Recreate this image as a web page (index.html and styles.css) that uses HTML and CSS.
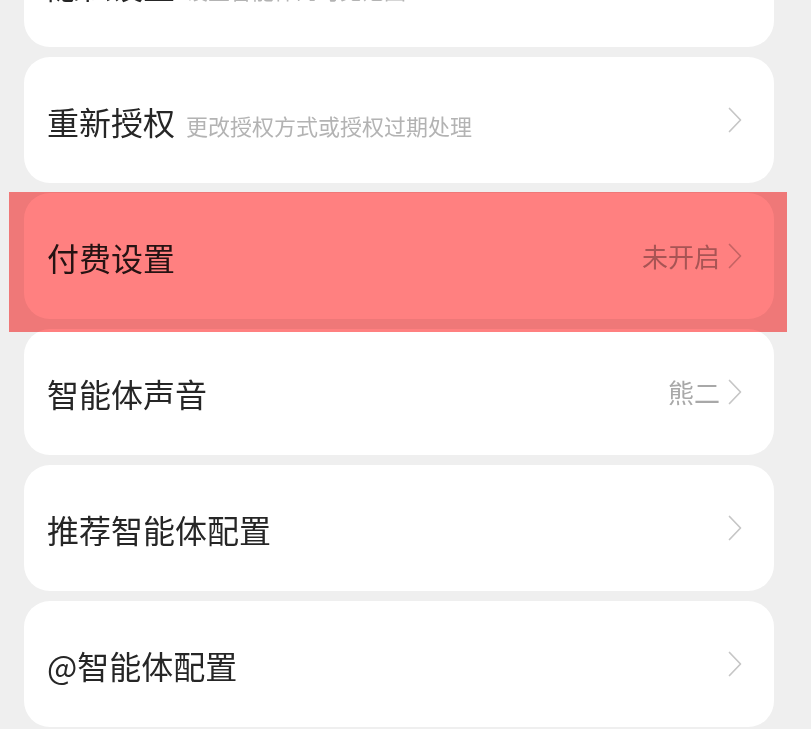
FILE: index.html
```html
<!DOCTYPE html>
<html lang="zh">
<head>
<meta charset="utf-8">
<link rel="stylesheet" href="styles.css">
</head>
<body>
<div class="list">
  <div class="card">
    <div class="left"><span class="title">隐私设置</span><span class="sub">设置智能体的可见范围</span></div>
    <div class="right"><svg class="chev" viewBox="0 0 14 26"><path d="M1.5 1.5 L12.5 13 L1.5 24.5" /></svg></div>
  </div>
  <div class="card">
    <div class="left"><span class="title">重新授权</span><span class="sub">更改授权方式或授权过期处理</span></div>
    <div class="right"><svg class="chev" viewBox="0 0 14 26"><path d="M1.5 1.5 L12.5 13 L1.5 24.5" /></svg></div>
  </div>
  <div class="card">
    <div class="left"><span class="title">付费设置</span></div>
    <div class="right"><span class="value">未开启</span><svg class="chev" viewBox="0 0 14 26"><path d="M1.5 1.5 L12.5 13 L1.5 24.5" /></svg></div>
  </div>
  <div class="card">
    <div class="left"><span class="title">智能体声音</span></div>
    <div class="right"><span class="value">熊二</span><svg class="chev" viewBox="0 0 14 26"><path d="M1.5 1.5 L12.5 13 L1.5 24.5" /></svg></div>
  </div>
  <div class="card">
    <div class="left"><span class="title">推荐智能体配置</span></div>
    <div class="right"><svg class="chev" viewBox="0 0 14 26"><path d="M1.5 1.5 L12.5 13 L1.5 24.5" /></svg></div>
  </div>
  <div class="card">
    <div class="left"><span class="title">@智能体配置</span></div>
    <div class="right"><svg class="chev" viewBox="0 0 14 26"><path d="M1.5 1.5 L12.5 13 L1.5 24.5" /></svg></div>
  </div>
</div>
<div class="highlight"></div>
</body>
</html>
```
FILE: styles.css
```css
html, body {
  margin: 0;
  padding: 0;
  background: #efefef;
  height: 100%;
  overflow: hidden;
}
body {
  font-family: "Noto Sans CJK SC", "Noto Sans", sans-serif;
  position: relative;
}
.list {
  display: flex;
  flex-direction: column;
  gap: 10px;
  padding: 0 37px 0 24px;
  margin-top: -79px;
}
.card {
  height: 126px;
  background: #fff;
  border-radius: 26px;
  display: flex;
  align-items: center;
  justify-content: space-between;
  padding: 0 32px 0 23px;
  box-sizing: border-box;
}
.left {
  display: flex;
  align-items: baseline;
  gap: 11px;
  margin-top: 2px;
}
.title {
  font-size: 32px;
  color: #262626;
  line-height: 1;
}
.sub {
  font-size: 22px;
  color: #b3b3b3;
  line-height: 1;
}
.right {
  display: flex;
  align-items: center;
  gap: 8px;
}
.value {
  font-size: 26px;
  color: #a8a8a8;
  line-height: 1;
}
.chev {
  width: 14px;
  height: 26px;
  display: block;
}
.chev path {
  fill: none;
  stroke: #c6c6c6;
  stroke-width: 1.7;
  stroke-linecap: round;
  stroke-linejoin: round;
}
.highlight {
  position: absolute;
  left: 9px;
  top: 192px;
  width: 778px;
  height: 140px;
  background: #ff8080;
  mix-blend-mode: multiply;
}
```
